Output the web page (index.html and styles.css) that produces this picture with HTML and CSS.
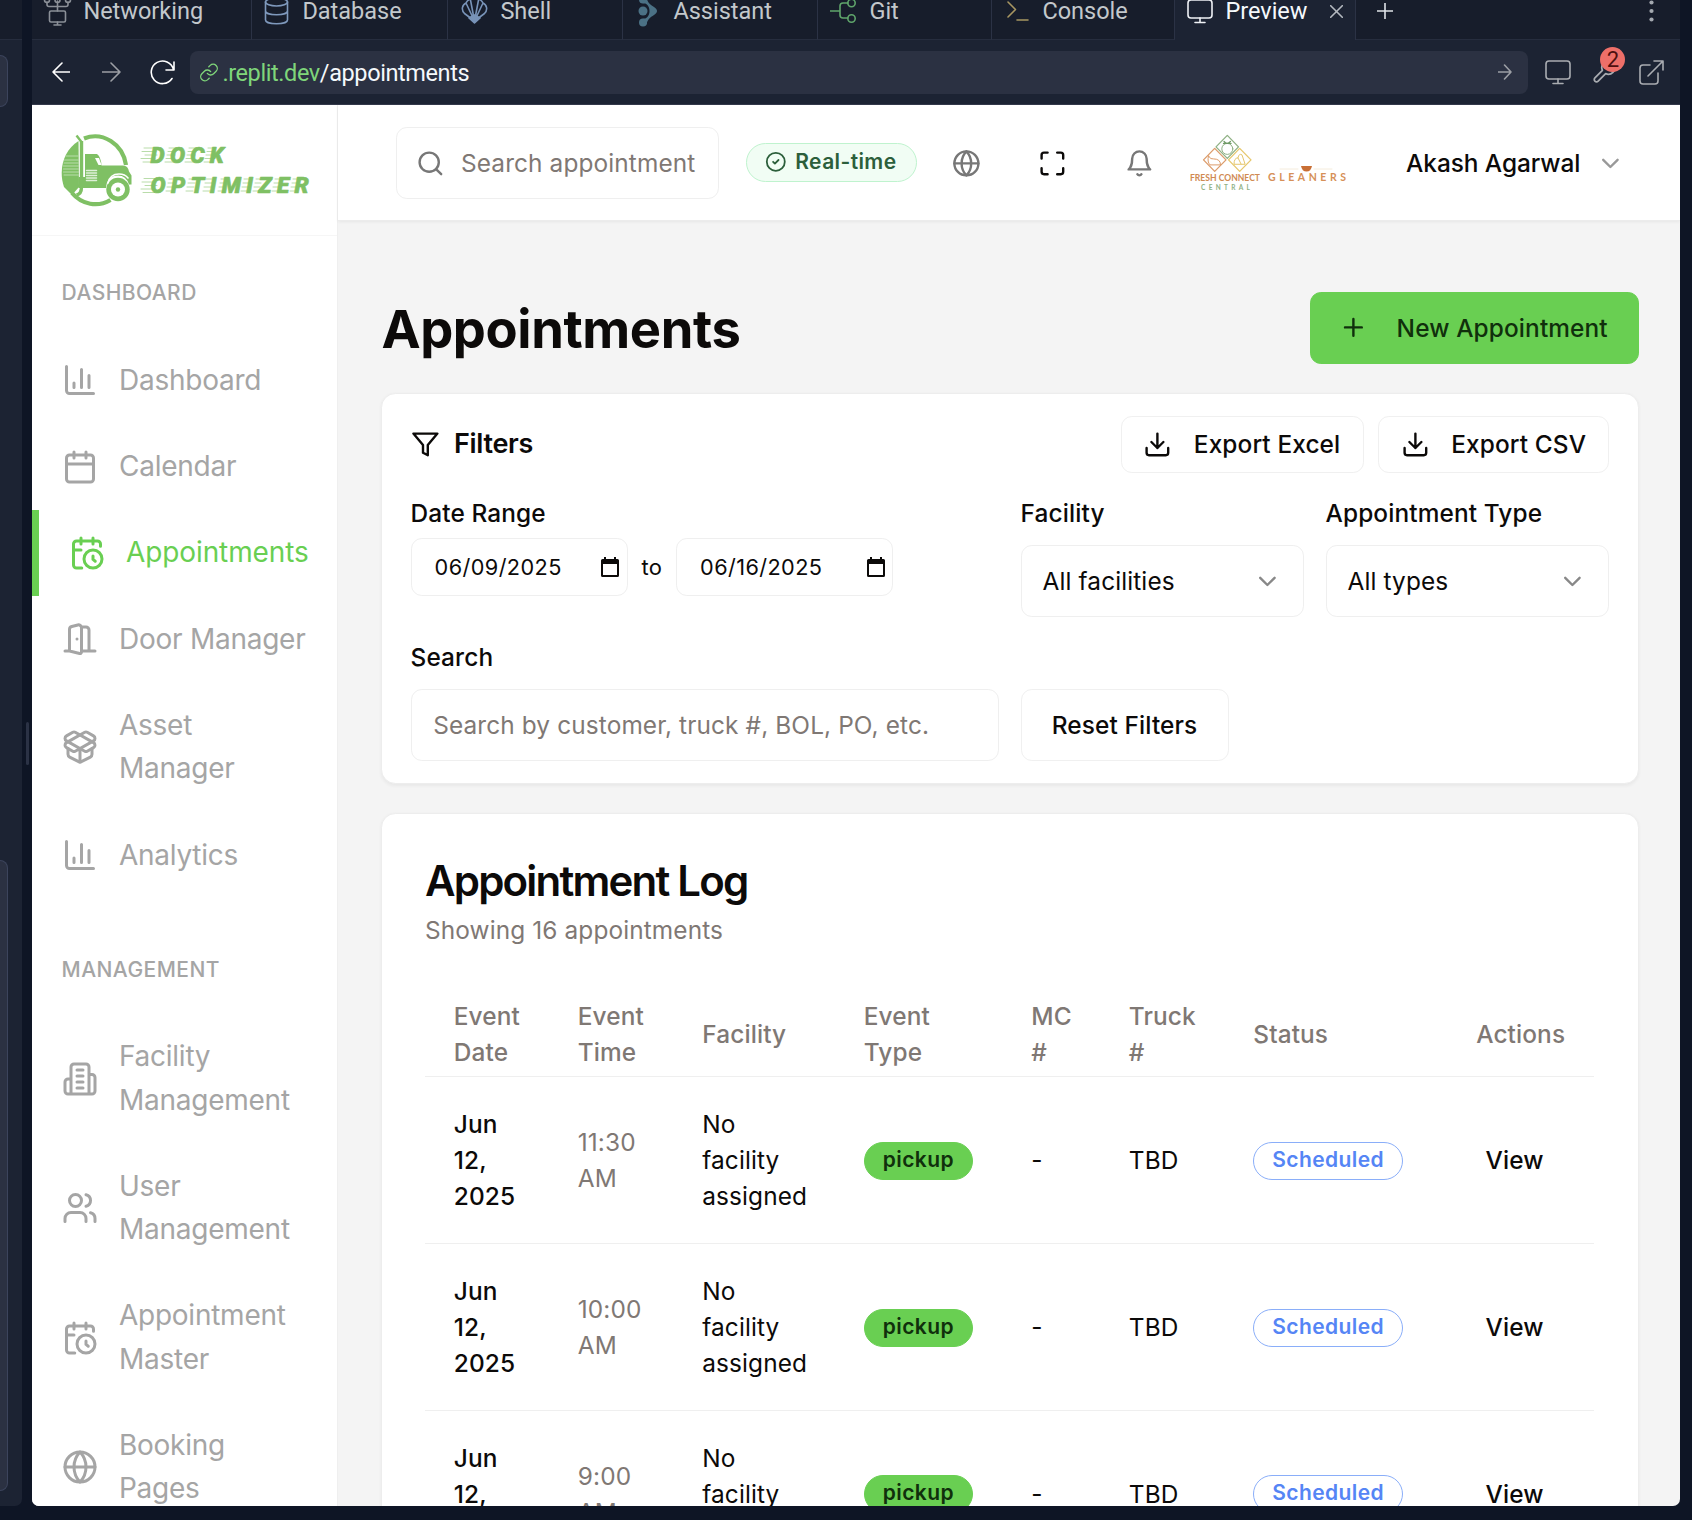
FILE: index.html
```html
<!DOCTYPE html>
<html lang="en">
<head>
<meta charset="utf-8">
<title>Appointments</title>
<link rel="stylesheet" href="styles.css">
</head>
<body>
<svg class="sprite" xmlns="http://www.w3.org/2000/svg">
  <symbol id="chart" viewBox="0 0 24 24"><path d="M3 3v16a2 2 0 0 0 2 2h16M18 17V9M13 17V5M8 17v-3"/></symbol>
  <symbol id="calendar" viewBox="0 0 24 24"><path d="M8 2v4M16 2v4M3 10h18"/><rect x="3" y="4" width="18" height="18" rx="2"/></symbol>
  <symbol id="calendar-clock" viewBox="0 0 24 24"><path d="M21 7.5V6a2 2 0 0 0-2-2H5a2 2 0 0 0-2 2v14a2 2 0 0 0 2 2h3.5M16 2v4M8 2v4M3 10h5M17.500 17.500 16 16.300V14"/><circle cx="16" cy="16" r="6"/></symbol>
  <symbol id="door" viewBox="0 0 24 24"><path d="M13 4h3a2 2 0 0 1 2 2v14M2 20h3M13 20h9M10 12v.01M13 4.562v16.157a1 1 0 0 1-1.242.97L5 20V5.562a2 2 0 0 1 1.515-1.940l4-1A2 2 0 0 1 13 4.561Z"/></symbol>
  <symbol id="package" viewBox="0 0 24 24"><path d="M12 22v-9M15.170 2.210a1.670 1.670 0 0 1 1.630 0L21 4.570a1.930 1.930 0 0 1 0 3.360L8.820 14.790a1.655 1.655 0 0 1-1.640 0L3 12.430a1.930 1.930 0 0 1 0-3.360z"/><path d="M20 13v3.870a2.060 2.060 0 0 1-1.110 1.830l-6 3.080a1.930 1.930 0 0 1-1.780 0l-6-3.080A2.060 2.060 0 0 1 4 16.870V13"/><path d="M21 12.430a1.930 1.930 0 0 0 0-3.360L8.830 2.200a1.640 1.640 0 0 0-1.630 0L3 4.570a1.930 1.930 0 0 0 0 3.360l12.180 6.860a1.636 1.636 0 0 0 1.630 0z"/></symbol>
  <symbol id="building" viewBox="0 0 24 24"><path d="M6 22V4a2 2 0 0 1 2-2h8a2 2 0 0 1 2 2v18ZM6 12H4a2 2 0 0 0-2 2v6a2 2 0 0 0 2 2h2M18 9h2a2 2 0 0 1 2 2v9a2 2 0 0 1-2 2h-2M10 6h4M10 10h4M10 14h4M10 18h4"/></symbol>
  <symbol id="users" viewBox="0 0 24 24"><path d="M16 21v-2a4 4 0 0 0-4-4H6a4 4 0 0 0-4 4v2M22 21v-2a4 4 0 0 0-3-3.870M16 3.130a4 4 0 0 1 0 7.750"/><circle cx="9" cy="7" r="4"/></symbol>
  <symbol id="globe" viewBox="0 0 24 24"><circle cx="12" cy="12" r="10"/><path d="M12 2a14.500 14.500 0 0 0 0 20 14.500 14.500 0 0 0 0-20M2 12h20"/></symbol>
  <symbol id="search" viewBox="0 0 24 24"><circle cx="11" cy="11" r="8"/><path d="m21 21-4.300-4.300"/></symbol>
  <symbol id="check" viewBox="0 0 24 24"><circle cx="12" cy="12" r="10"/><path d="m9 12 2 2 4-4"/></symbol>
  <symbol id="maximize" viewBox="0 0 24 24"><path d="M8 3H5a2 2 0 0 0-2 2v3M21 8V5a2 2 0 0 0-2-2h-3M3 16v3a2 2 0 0 0 2 2h3M16 21h3a2 2 0 0 0 2-2v-3"/></symbol>
  <symbol id="bell" viewBox="0 0 24 24"><path d="M6 8a6 6 0 0 1 12 0c0 7 3 9 3 9H3s3-2 3-9M10.300 21a1.940 1.940 0 0 0 3.400 0"/></symbol>
  <symbol id="chevron" viewBox="0 0 24 24"><path d="m6 9 6 6 6-6"/></symbol>
  <symbol id="plus" viewBox="0 0 24 24"><path d="M5 12h14M12 5v14"/></symbol>
  <symbol id="funnel" viewBox="0 0 24 24"><path d="M22 3H2l8 9.460V19l4 2v-8.540z"/></symbol>
  <symbol id="download" viewBox="0 0 24 24"><path d="M21 15v4a2 2 0 0 1-2 2H5a2 2 0 0 1-2-2v-4M7 10l5 5 5-5M12 15V3"/></symbol>
  <symbol id="datepick" viewBox="0 0 18 20"><path fill="currentColor" stroke="none" fill-rule="evenodd" d="M3 0h2v2h8V0h2v2h1.500A1.500 1.500 0 0 1 18 3.500V18.500A1.500 1.500 0 0 1 16.500 20h-15A1.500 1.500 0 0 1 0 18.500V3.500A1.500 1.500 0 0 1 1.500 2H3zM2 7v11h14V7z"/></symbol>
  <symbol id="monitor" viewBox="0 0 26 25"><rect x="1" y="1" width="24" height="18" rx="3"/><path d="M13 19v4.500M8 23.500h10"/></symbol>
</svg>

<aside class="side-pane">
  <div class="side-tabs"></div>
  <div class="side-box side-box-a"></div>
  <div class="side-box side-box-b"></div>
</aside>
<div class="gutter"><div class="handle"></div></div>

<main class="workspace">
  <nav class="tabs">
    <div class="tab tab-net">
      <svg class="ti" width="29" height="30" viewBox="0 0 29 30" stroke="#8b9098"><rect x="6.500" y="15" width="16" height="11" rx="1.500"/><path d="M14.500 26v3M11 29h7M14.500 15V5M4 6v2.500q0 2 2 2h17q2 0 2-2V6"/><circle cx="4" cy="4" r="2.500"/><circle cx="14.500" cy="4" r="2.500"/><circle cx="25" cy="4" r="2.500"/></svg>
      <span class="tl">Networking</span>
    </div>
    <div class="tab tab-db">
      <svg class="ti" width="25" height="28" viewBox="0 0 25 28" stroke="#7f99bd"><ellipse cx="12.500" cy="5" rx="11" ry="4"/><path d="M1.500 5v18c0 5 22 5 22 0V5M1.500 14c0 5 22 5 22 0"/></svg>
      <span class="tl">Database</span>
    </div>
    <div class="tab tab-shell">
      <svg class="ti" width="27" height="27" viewBox="0 0 27 27" stroke="#7893b8"><path d="M13.500 24 3.500 16.500C0 13 1 8 5 6c2-4 6-5 8.500-4 2.500-1 6.500 0 8.500 4 4 2 5 7 1.500 10.500zM13.500 24 5 6M13.500 24 9.500 3M13.500 24l4-21M13.500 24 22 6"/><path d="m8 21 5.500-3 5.500 3-5.500 5z" fill="#7893b8"/></svg>
      <span class="tl">Shell</span>
    </div>
    <div class="tab tab-ai">
      <svg class="ti" width="20" height="32" viewBox="0 0 20 32"><g fill="#4b7185"><circle cx="5" cy="4.500" r="4"/><circle cx="5" cy="16" r="4.500"/><circle cx="5" cy="27.500" r="4"/><path d="M8.500 2.500c1 5 3.500 7 7.500 9.500 4 2.500 4 5.500 0 8-4 2.500-6.500 4.500-7.500 9.500L4 24c5 0 7.500-3.500 7.500-8S9 8 4 8z"/></g></svg>
      <span class="tl">Assistant</span>
    </div>
    <div class="tab tab-git">
      <svg class="ti" width="27" height="26" viewBox="0 0 27 26" stroke="#5fa56b"><path d="M0 13h10M18 5h-5q-3 0-3 3v9q0 3 3 3h5"/><circle cx="21.500" cy="5" r="3.700"/><circle cx="21.500" cy="20.500" r="3.700"/></svg>
      <span class="tl">Git</span>
    </div>
    <div class="tab tab-con">
      <svg class="ti" width="22" height="22" viewBox="0 0 22 22" stroke="#a79661"><path d="m1 2 7.500 7.500L1 17M10 20h11"/></svg>
      <span class="tl">Console</span>
    </div>
    <div class="tab tab-pre">
      <svg class="ti" width="26" height="25" stroke="#eef1f5"><use href="#monitor"/></svg>
      <span class="tl">Preview</span>
      <svg class="tx" width="13" height="13" viewBox="0 0 13 13" stroke="#b4b9c0"><path d="m.7.7 11.600 11.600M12.300.7.7 12.300"/></svg>
    </div>
    <div class="tab-end">
      <svg width="16" height="16" viewBox="0 0 16 16" stroke="#dfe3e8"><path d="M8 0v16M0 8h16"/></svg>
      <svg width="5" height="24" viewBox="0 0 5 24"><g fill="#a4a9b0"><circle cx="2.500" cy="3.500" r="2.100"/><circle cx="2.500" cy="12" r="2.100"/><circle cx="2.500" cy="20.500" r="2.100"/></g></svg>
    </div>
  </nav>

  <div class="toolbar">
    <svg class="i-back" width="18" height="20" viewBox="0 0 18 20" stroke="#fff"><path d="M18 10H1M10 1 1 10l9 9"/></svg>
    <svg class="i-fwd" width="19" height="20" viewBox="0 0 19 20" stroke="#9c9fa5"><path d="M0 10h18M9 1l9 9-9 9"/></svg>
    <svg class="i-load" width="27" height="25" viewBox="0 0 27 25" stroke="#fff"><path d="M25 2v8h-8M24.500 9.500A11.300 11.300 0 1 0 23 18.500"/></svg>
    <div class="url">
      <svg width="20" height="21" viewBox="0 0 24 24" stroke="#7fd67a"><path d="M10 13a5 5 0 0 0 7.540.54l3-3a5 5 0 0 0-7.070-7.070l-1.720 1.710M14 11a5 5 0 0 0-7.540-.54l-3 3a5 5 0 0 0 7.070 7.070l1.710-1.710"/></svg>
      <span class="host">.replit.dev</span><span class="path">/appointments</span>
      <svg class="go" width="14" height="16" viewBox="0 0 14 16" stroke="#9c9fa5"><path d="M0 8h13M6.500 1l6.500 7-6.500 7"/></svg>
    </div>
    <svg class="i-mon" width="26" height="25" stroke="#a9acb1"><use href="#monitor"/></svg>
    <div class="wrench">
      <svg width="26" height="26" viewBox="0 0 24 24" stroke="#a9acb1"><path d="M14.700 6.300a1 1 0 0 0 0 1.400l1.600 1.600a1 1 0 0 0 1.400 0l3.770-3.770a6 6 0 0 1-7.940 7.940l-6.910 6.910a2.120 2.120 0 0 1-3-3l6.910-6.910a6 6 0 0 1 7.940-7.940l-3.760 3.760z"/></svg>
      <span class="count">2</span>
    </div>
    <svg class="i-ext" width="25" height="25" viewBox="0 0 25 25" stroke="#a9acb1"><path d="M11 5H4q-3 0-3 3v13q0 3 3 3h12q3 0 3-3v-8M9 16 24 1M15 1h9v9"/></svg>
  </div>

  <div class="app">
    <aside class="sidebar">
      <div class="brand">
        <svg width="250" height="76" viewBox="0 0 250 76">
          <g fill="none" stroke="#7fc064" stroke-linecap="butt">
            <path d="M23 5.500A31.500 34 0 0 1 65 32M49.500 67A31.500 34 0 0 1 11 60" stroke-width="4.200"/>
            <path d="M15.500 2.500 20.500 9" stroke-width="2.400"/>
            <path d="M20.500 8v46q0 7-5 8" stroke-width="3.400"/>
          </g>
          <g fill="#7fc064">
            <path d="M17.500 8C3 17-3 36 3 54l8 8 7-8z"/>
            <path d="M24 21h12q4 3 4.500 11.500H62q5 0 6 6l2.500 4v9h-2.500q-3-9-11-9-11 0-12 12.500H17.500V44H24z"/>
            <circle cx="57" cy="56.500" r="11.700"/>
          </g>
          <path d="M34 25h4l2.500 7h-3z" fill="#fff"/>
          <path d="M47 50q2-9 11-9 6 0 9 4" stroke="#fff" stroke-width="1.600"/>
          <path d="M5 23h12.500M3.500 27h14M3 30h14.500M2.500 33h15M2.500 36h15M2.500 39h15M3 42h14.500" stroke="#b9dcaa" stroke-width="1"/>
          <path d="M25.500 37.500h10M25.500 40h10M25.500 42.500h10M25.500 45h10M25.500 47.500h10" stroke="#dff0d8" stroke-width="1.500"/>
          <circle cx="57" cy="56.500" r="7" fill="#fff"/><circle cx="57" cy="56.500" r="2.200" fill="#7fc064"/>
          <g stroke="#b9dcaa" stroke-width="1">
            <path d="M83 15h14M81 18.500h14M84 22h12M80 25.500h14M82 29h12M108 15h8M107 18.500h8M106 22h8M105 25.500h8M104 29h8M128 15h8M127 18.500h8M126 22h8M125 25.500h8M124 29h8M147 15h8M146 18.500h8M145 22h8M144 25.500h8M143 29h8"/>
            <path d="M83 45.500h14M81 49h14M84 52.500h12M80 56h14M82 59.500h12M108 46h7M107 50h7M106 54h7M105 58h7M128 46h7M127 50h7M126 54h7M125 58h7M145 46h7M144 50h7M143 54h7M142 58h7M160 46h5M159 50h5M158 54h5M157 58h5M183 46h6M182 50h6M181 54h6M180 58h6M195 46h6M194 50h6M193 54h6M192 58h6M214 46h6M213 50h6M212 54h6M211 58h6M232 46h6M231 50h6M230 54h6M229 58h6"/>
          </g>
          <g class="brand-text"><text x="89.500" y="30" textLength="73">DOCK</text><text x="89.500" y="60" textLength="158">OPTIMIZER</text></g>
        </svg>
      </div>
      <div class="section">DASHBOARD</div>
      <a class="item"><svg class="i20"><use href="#chart"/></svg><span>Dashboard</span></a>
      <a class="item"><svg class="i20"><use href="#calendar"/></svg><span>Calendar</span></a>
      <a class="item active"><svg class="i20"><use href="#calendar-clock"/></svg><span>Appointments</span></a>
      <a class="item"><svg class="i20"><use href="#door"/></svg><span>Door Manager</span></a>
      <a class="item"><svg class="i20"><use href="#package"/></svg><span>Asset<br>Manager</span></a>
      <a class="item"><svg class="i20"><use href="#chart"/></svg><span>Analytics</span></a>
      <div class="section second">MANAGEMENT</div>
      <a class="item"><svg class="i20"><use href="#building"/></svg><span>Facility<br>Management</span></a>
      <a class="item"><svg class="i20"><use href="#users"/></svg><span>User<br>Management</span></a>
      <a class="item"><svg class="i20"><use href="#calendar-clock"/></svg><span>Appointment<br>Master</span></a>
      <a class="item"><svg class="i20"><use href="#globe"/></svg><span>Booking<br>Pages</span></a>
    </aside>

    <div class="page">
      <header class="topbar">
        <div class="quick"><svg class="i16"><use href="#search"/></svg><span>Search appointment</span></div>
        <div class="live"><svg><use href="#check"/></svg><span>Real-time</span></div>
        <svg class="i16 t-globe"><use href="#globe"/></svg>
        <svg class="i16 t-max"><use href="#maximize"/></svg>
        <svg class="i16 t-bell"><use href="#bell"/></svg>
        <svg class="partners" width="160" height="58" viewBox="0 0 160 58">
          <g fill="none" stroke-width="1.300" stroke-linejoin="round" transform="translate(0 .9)">
            <path d="M38.300 1.500 49.500 13 38.300 24.500 27 13z" stroke="#8fb184"/><circle cx="38.300" cy="15" r="5.500" stroke="#8fb184" stroke-width="1"/><path d="M35 7.500q3 4 6.500 0M34.500 9.500h7.500" stroke="#6f9a66"/>
            <path d="M25.700 14.500 37 26 25.700 37.500 14.500 26z" stroke="#dc9c6b"/><path d="M19.500 22q2 4 5 3 7 0 7 6H21q-3-3-1.500-9" stroke="#dc9c6b" stroke-width="1"/>
            <path d="M50.700 14.500 62 26 50.700 37.500 39.500 26z" stroke="#e6c76c"/><path d="M45 30q0-6 4-6 1-5 4-3l3 9zM49 24l3 6" stroke="#e6c76c" stroke-width="1"/>
          </g>
          <text class="fc" x="1" y="48" textLength="70" lengthAdjust="spacingAndGlyphs">FRESH CONNECT</text>
          <text class="fc2" x="12" y="57" textLength="49">CENTRAL</text>
          <path d="M91 36h18M125 36h18" stroke="#f5ecdc" stroke-width="1"/><path d="M112 33h11q-1 5.500-5.500 5.500T112 33" fill="#c96f35"/>
          <text class="gl" x="79" y="48" textLength="78">GLEANERS</text>
        </svg>
        <span class="user">Akash Agarwal</span>
        <svg class="i16 t-chev"><use href="#chevron"/></svg>
      </header>

      <div class="content">
        <div class="head">
          <h1>Appointments</h1>
          <div class="btn primary"><svg class="i16"><use href="#plus"/></svg><span>New Appointment</span></div>
        </div>

        <section class="card filters">
          <div class="frow">
            <svg class="i16"><use href="#funnel"/></svg><h3>Filters</h3>
            <div class="btn sm excel"><svg class="i16"><use href="#download"/></svg><span>Export Excel</span></div>
            <div class="btn sm csv"><svg class="i16"><use href="#download"/></svg><span>Export CSV</span></div>
          </div>
          <div class="grid">
            <div class="field wide">
              <label>Date Range</label>
              <div class="dates">
                <div class="date"><span>06/09/2025</span><svg width="18" height="20"><use href="#datepick"/></svg></div>
                <span class="to">to</span>
                <div class="date"><span>06/16/2025</span><svg width="18" height="20"><use href="#datepick"/></svg></div>
              </div>
            </div>
            <div class="field"><label>Facility</label><div class="select"><span>All facilities</span><svg class="i16"><use href="#chevron"/></svg></div></div>
            <div class="field"><label>Appointment Type</label><div class="select"><span>All types</span><svg class="i16"><use href="#chevron"/></svg></div></div>
            <div class="field wide"><label>Search</label><div class="input">Search by customer, truck #, BOL, PO, etc.</div></div>
            <div class="btn reset">Reset Filters</div>
          </div>
        </section>

        <section class="card log">
          <h2>Appointment Log</h2>
          <p>Showing 16 appointments</p>
          <table>
            <colgroup><col class="c1"><col class="c2"><col class="c3"><col class="c4"><col class="c5"><col class="c6"><col class="c7"><col></colgroup>
            <thead><tr><th>Event<br>Date</th><th>Event<br>Time</th><th>Facility</th><th>Event<br>Type</th><th>MC<br>#</th><th>Truck<br>#</th><th>Status</th><th class="r">Actions</th></tr></thead>
            <tbody>
              <tr><td class="m">Jun<br>12,<br>2025</td><td class="g">11:30<br>AM</td><td>No<br>facility<br>assigned</td><td><span class="badge pick">pickup</span></td><td>-</td><td>TBD</td><td><span class="badge sched">Scheduled</span></td><td class="r view">View</td></tr>
              <tr><td class="m">Jun<br>12,<br>2025</td><td class="g">10:00<br>AM</td><td>No<br>facility<br>assigned</td><td><span class="badge pick">pickup</span></td><td>-</td><td>TBD</td><td><span class="badge sched">Scheduled</span></td><td class="r view">View</td></tr>
              <tr><td class="m">Jun<br>12,<br>2025</td><td class="g">9:00<br>AM</td><td>No<br>facility<br>assigned</td><td><span class="badge pick">pickup</span></td><td>-</td><td>TBD</td><td><span class="badge sched">Scheduled</span></td><td class="r view">View</td></tr>
            </tbody>
          </table>
        </section>
      </div>
    </div>
  </div>
</main>
</body>
</html>
```

FILE: styles.css
```css
* { box-sizing: border-box; }
body {
  margin: 0;
  width: 1692px;
  height: 1520px;
  overflow: hidden;
  display: flex;
  background: #0e1525;
  font-family: Inter, "Liberation Sans", sans-serif;
  font-size: 24.4px;
  line-height: 36px;
  letter-spacing: 0.12px;
  color: #0c0a09;
}
svg { flex: none; fill: none; stroke-width: 2; stroke-linecap: round; stroke-linejoin: round; display: block; }
.sprite { position: absolute; width: 0; height: 0; }
h1, h2, h3, p { margin: 0; }
.i16 { width: 28.8px; height: 28.8px; stroke: currentColor; }
.i20 { width: 36px; height: 36px; stroke: currentColor; }

/* neighbouring pane, cut off at the window edge */
.side-pane { width: 22px; height: 1505.6px; background: #1c2333; border-radius: 0 0 7px 0; overflow: hidden; }
.side-tabs { height: 40px; background: #171d2b; border-bottom: 1px solid #262d3e; }
.side-box { width: 8px; background: #2b3142; border: 1px solid #3c445c; border-left: 0; }
.side-box-a { margin-top: 15px; height: 52px; border-radius: 0 12px 12px 0; }
.side-box-b { margin-top: 753px; height: 631px; border-radius: 0 9px 9px 0; }
.gutter { width: 10.4px; padding: 722px 0 0 4px; }
.handle { width: 3px; height: 43px; border-radius: 2px; background: #2b3245; }
.workspace { width: 1647.6px; height: 1505.6px; border-radius: 0 0 7px 7px; overflow: hidden; background: #1c2333; }

/* tab strip */
.tabs { display: flex; height: 60px; margin-top: -20px; background: #171d2b; font-family: Roboto, sans-serif; font-size: 23.5px; letter-spacing: 0; color: #c3c8cc; }
.tab { display: flex; align-items: center; padding-top: 2px; border-right: 1px solid #2b3245; border-bottom: 1px solid #262d3e; }
.tab svg, .tab-end svg, .toolbar svg { stroke-width: 1.6; }
.ti { margin-left: 11px; }
.tl { white-space: nowrap; margin-left: 12px; }
.tab-net { width: 220px; }
.tab-db { width: 196px; }
.tab-shell { width: 175px; }
.tab-ai { width: 195px; }
.tab-git { width: 174px; }
.tab-con { width: 183px; }
.tab-pre { width: 181px; background: #1c2333; color: #f5f9fc; border-bottom: 0; }
.tab-net .tl { margin-left: 11px; }
.tab-db .ti, .tab-shell .ti, .tab-git .ti, .tab-pre .ti { margin-left: 12px; }
.tab-shell .ti { margin-left: 13px; }
.tab-ai .ti { margin-left: 15px; }
.tab-ai .tl { margin-left: 15px; }
.tab-con .tl { margin-left: 13px; }
.tab-con .ti { margin-left: 15px; }
.tab-db .tl { margin-left: 13px; }
.tx { margin-left: 22px; }
.tab-end { flex: 1; display: flex; align-items: center; justify-content: space-between; padding: 2px 26px 0 21px; border-bottom: 1px solid #262d3e; }

/* address bar */
.toolbar { height: 65px; display: flex; align-items: center; background: #1c2333; border-bottom: 1px solid #34394b; }
.i-back { margin-left: 20px; }
.i-fwd { margin-left: 32px; }
.i-load { margin-left: 28px; }
.url { width: 1338px; height: 43px; margin-left: 14px; padding: 0 16px 0 9px; display: flex; align-items: center; border-radius: 8px; background: #2b3142; font-family: Roboto, sans-serif; font-size: 23.5px; letter-spacing: -0.4px; }
.url span { padding-top: 1px; }
.host { margin-left: 3px; color: #7fd67a; }
.path { color: #f5f9fc; }
.go { margin-left: auto; }
.i-mon { margin-left: 17px; }
.wrench { position: relative; margin-left: 20px; }
.count { position: absolute; left: 9px; top: -12px; width: 25px; height: 25px; border-radius: 50%; background: #ee6f69; color: #4f0f0f; font-family: Roboto, sans-serif; font-size: 22px; line-height: 26px; text-align: center; letter-spacing: 0; }
.i-ext { margin-left: 22px; }

/* application */
.app { display: flex; height: 1402px; background: #f4f4f4; }
.sidebar { width: 305.8px; flex: none; background: #fff; border-right: 1.8px solid #efefef; color: #a5a5a5; overflow: hidden; letter-spacing: -0.25px; }
.brand { height: 131.2px; padding: 27.5px 0 0 28.8px; border-bottom: 1.8px solid #f6f6f6; }
.brand-text { font: italic 900 22.5px Roboto, sans-serif; fill: #7fc064; stroke: #7fc064; stroke-width: .7px; }
.section { margin: 43.2px 0 28.8px; padding-left: 29.2px; font-size: 21px; line-height: 28.8px; font-weight: 500; letter-spacing: 0.45px; }
.section.second { margin-top: 57.6px; }
.item { display: flex; align-items: center; gap: 21.2px; padding: 21.6px 0 21.6px 29.4px; font-size: 28px; line-height: 43.2px; white-space: nowrap; }
.active { border-left: 7.2px solid #69cf52; color: #69cf52; letter-spacing: -0.1px; }

.page { flex: 1; min-width: 0; }
.topbar { height: 116px; display: flex; align-items: center; padding: 1px 0 0 58px; background: #fff; border-bottom: 1.8px solid #ececec; box-shadow: 0 1px 3px rgba(0,0,0,.06); }
.quick { width: 323px; height: 72px; display: flex; align-items: center; gap: 16px; padding: 0 18px 0 19px; border: 1.8px solid #efefef; border-radius: 10.8px; color: #7f7874; white-space: nowrap; }
.quick svg { stroke: #777; }
.live { width: 171px; height: 39px; margin-left: 27px; padding-left: 18px; display: flex; align-items: center; gap: 8.5px; border: 1.8px solid #bff3ce; border-radius: 20px; background: #f1fdf4; color: #2c5f3b; font-size: 21px; font-weight: 600; letter-spacing: 0.4px; margin-top: -2px; }
.live svg { width: 21.6px; height: 21.6px; stroke: currentColor; }
.t-globe { margin-left: 35px; color: #777; }
.t-max { margin-left: 57px; }
.t-bell { margin-left: 58.5px; color: #777; }
.partners { margin-left: 35px; overflow: visible; margin-top: -3px; }
.fc { font: 700 8.5px Lato, sans-serif; fill: #d08a52; letter-spacing: 0; }
.fc2 { font: 700 6.5px Lato, sans-serif; fill: #8fb184; letter-spacing: 0; }
.gl { font: 700 10.5px Lato, sans-serif; fill: #d69058; letter-spacing: 0; }
.user { margin-left: 57px; width: 175px; font-weight: 500; letter-spacing: -0.05px; white-space: nowrap; }
.t-chev { margin-left: 14.5px; color: #999; }

.content { padding: 70.6px 41.2px 0 43.2px; }
.head { display: flex; justify-content: space-between; align-items: center; height: 72px; }
h1 { font-size: 52.5px; line-height: 65px; font-weight: 700; padding-top: 4px; letter-spacing: -0.4px; }
.btn { display: flex; align-items: center; height: 72px; border: 1.8px solid #f0f0f0; border-radius: 10.8px; background: #fff; font-weight: 500; white-space: nowrap; }
.btn span { margin-left: 21.6px; }
.primary { width: 329px; padding-left: 28px; background: #69cf52; border-color: #69cf52; color: #10300c; }
.primary span { margin-left: 29px; }
.sm { height: 57.6px; padding-left: 21.6px; }
.excel { width: 243px; margin-left: auto; }
.csv { width: 231px; margin-left: 14.4px; }
.card { background: #fff; border: 1.8px solid #ededed; border-radius: 14.4px; box-shadow: 0 1.8px 3.6px rgba(0,0,0,.05); }
.filters { margin-top: 29.4px; height: 391px; padding: 21.6px 28.6px 0 28.2px; }
.frow { display: flex; align-items: center; height: 57.6px; }
.frow > svg { margin-left: .6px; }
h3 { margin-left: 14px; font-size: 27px; font-weight: 600; letter-spacing: -0.3px; }
.grid { display: grid; grid-template-columns: 283px 283px 283px 283px; column-gap: 22px; margin-top: 22px; row-gap: 21.8px; align-items: start; }
.wide { grid-column: span 2; }
label { display: block; font-weight: 500; }
.dates { display: flex; align-items: center; margin-top: 7px; }
.date { width: 217px; height: 57.6px; display: flex; align-items: center; justify-content: space-between; padding: 0 7.5px 0 23px; border: 1.8px solid #efefef; border-radius: 10.8px; font-size: 21.7px; letter-spacing: 0.4px; }
.to { width: 48.5px; text-align: center; font-size: 22px; }
.select, .input { height: 72px; margin-top: 14px; padding: 0 21px; display: flex; align-items: center; justify-content: space-between; border: 1.8px solid #efefef; border-radius: 10.8px; }
.select svg { color: #888; }
.input { color: #7f7874; padding-left: 21.6px; }
.reset { width: 208px; margin-top: 50px; justify-content: center; }

.log { margin-top: 29px; height: 900px; padding: 44px 41.6px 0 42.6px; }
h2 { font-size: 42px; line-height: 46px; font-weight: 600; letter-spacing: -1.8px; }
.log p { margin-top: 8px; color: #7f7874; }
table { width: 1169px; margin-top: 43px; border-collapse: separate; border-spacing: 0; table-layout: fixed; }
.c1 { width: 124px; } .c2 { width: 124.5px; } .c3 { width: 161.5px; } .c4 { width: 167.5px; } .c5 { width: 97.5px; } .c6 { width: 124.5px; } .c7 { width: 223px; }
th, td { padding: 0 0 0 28.8px; text-align: left; border-bottom: 1.8px solid #efefef; white-space: nowrap; }
th { height: 86.4px; font-weight: 500; color: #7f7874; }
td { height: 166.7px; }
.r { text-align: right; padding: 0 28.8px 0 0; }
.m, .view { font-weight: 500; }
td.view { padding-right: 50.4px; }
.g { color: #7f7874; }
.badge { display: inline-block; height: 38px; line-height: 34.4px; padding: 0 18px; border: 1.8px solid #69cf52; border-radius: 19px; font-size: 21px; font-weight: 600; letter-spacing: 0.4px; vertical-align: middle; }
.pick { background: #69cf52; color: #10300c; }
.sched { border-color: #8aaef9; color: #5585f5; }
```
